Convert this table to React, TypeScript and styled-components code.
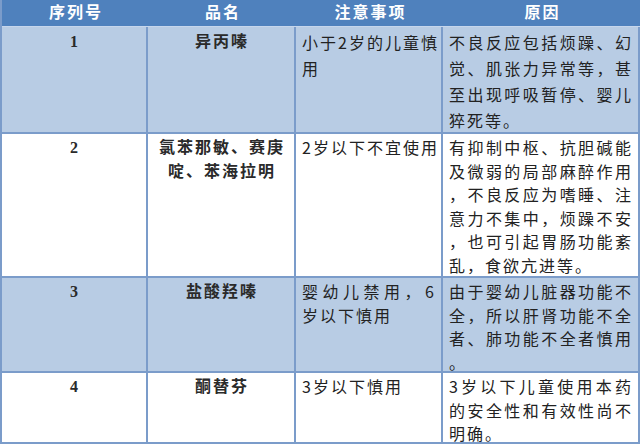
import styled, { createGlobalStyle } from "styled-components";

const GlobalStyle = createGlobalStyle`
  html, body {
    margin: 0;
    padding: 0;
    background: #fff;
  }
  body {
    font-family: "Noto Sans CJK SC", "Noto Sans", sans-serif;
  }
`;

const BORDER = "#7b9cca";
const HEAD_BG = "#4f81bd";
const LIGHT_BG = "#b8cce4";

const Table = styled.div`
  width: 640px;
  display: grid;
  grid-template-columns: 146px 148px 147px 197px;
  border-left: 2px solid ${BORDER};
  box-sizing: border-box;
`;

const HeadCell = styled.div`
  height: 27px;
  box-sizing: border-box;
  background: ${HEAD_BG};
  border-bottom: 1px solid #c6d6ec;
  color: #fff;
  font-family: "Liberation Serif", "Noto Sans CJK SC", serif;
  font-weight: 700;
  font-size: 16px;
  letter-spacing: 2px;
  line-height: 26px;
  text-align: center;
  padding-left: 2px;
`;

interface CellProps {
  $shade: boolean;
  $height: number;
  $lineHeight: number;
}

const Cell = styled.div<CellProps>`
  height: ${(p) => p.$height}px;
  box-sizing: border-box;
  background: ${(p) => (p.$shade ? LIGHT_BG : "#fff")};
  border-right: 2px solid ${BORDER};
  border-bottom: 2px solid ${BORDER};
  padding: 2px 5px 0 6px;
  font-size: 16px;
  line-height: ${(p) => p.$lineHeight}px;
  color: #222;
  overflow: hidden;
`;

const NameCell = styled(Cell)`
  text-align: center;
  font-family: "Liberation Serif", "Noto Sans CJK SC", serif;
  font-weight: 700;
  color: #2a2a2a;
  padding-left: 8px;
  padding-right: 6px;
`;

const Line = styled.div<{ $fill: boolean }>`
  white-space: nowrap;
  letter-spacing: 2px;
  text-align: ${(p) => (p.$fill ? "justify" : "inherit")};
  text-align-last: ${(p) => (p.$fill ? "justify" : "auto")};
`;

const CenterLine = styled.div`
  white-space: nowrap;
  letter-spacing: 2px;
`;

type Row = {
  no: string;
  name: string[];
  note: string[];
  reason: string[];
  height: number;
  lineHeight: number;
};

const rows: Row[] = [
  {
    no: "1",
    name: ["异丙嗪"],
    note: ["小于2岁的儿童慎", "用"],
    reason: [
      "不良反应包括烦躁、幻",
      "觉、肌张力异常等，甚",
      "至出现呼吸暂停、婴儿",
      "猝死等。",
    ],
    height: 107,
    lineHeight: 26,
  },
  {
    no: "2",
    name: ["氯苯那敏、赛庚", "啶、苯海拉明"],
    note: ["2岁以下不宜使用"],
    reason: [
      "有抑制中枢、抗胆碱能",
      "及微弱的局部麻醉作用",
      "，不良反应为嗜睡、注",
      "意力不集中，烦躁不安",
      "，也可引起胃肠功能紊",
      "乱，食欲亢进等。",
    ],
    height: 144,
    lineHeight: 23.5,
  },
  {
    no: "3",
    name: ["盐酸羟嗪"],
    note: ["婴幼儿禁用，6", "岁以下慎用"],
    reason: [
      "由于婴幼儿脏器功能不",
      "全，所以肝肾功能不全",
      "者、肺功能不全者慎用",
      "。",
    ],
    height: 95,
    lineHeight: 23.5,
  },
  {
    no: "4",
    name: ["酮替芬"],
    note: ["3岁以下慎用"],
    reason: ["3岁以下儿童使用本药", "的安全性和有效性尚不", "明确。"],
    height: 71,
    lineHeight: 23.5,
  },
];

const headers = ["序列号", "品名", "注意事项", "原因"];

function Lines({ lines }: { lines: string[] }) {
  return (
    <>
      {lines.map((l, i) => (
        <Line key={i} $fill={i < lines.length - 1}>
          {l}
        </Line>
      ))}
    </>
  );
}

export default function App() {
  return (
    <>
      <GlobalStyle />
      <Table>
        {headers.map((h) => (
          <HeadCell key={h}>{h}</HeadCell>
        ))}
        {rows.map((r, i) => {
          const shade = i % 2 === 0;
          const common = {
            $shade: shade,
            $height: r.height,
            $lineHeight: r.lineHeight,
          };
          return [
            <NameCell key={`${i}-no`} {...common}>
              <CenterLine>{r.no}</CenterLine>
            </NameCell>,
            <NameCell key={`${i}-name`} {...common}>
              {r.name.map((n) => (
                <CenterLine key={n}>{n}</CenterLine>
              ))}
            </NameCell>,
            <Cell key={`${i}-note`} {...common}>
              <Lines lines={r.note} />
            </Cell>,
            <Cell key={`${i}-reason`} {...common}>
              <Lines lines={r.reason} />
            </Cell>,
          ];
        })}
      </Table>
    </>
  );
}
